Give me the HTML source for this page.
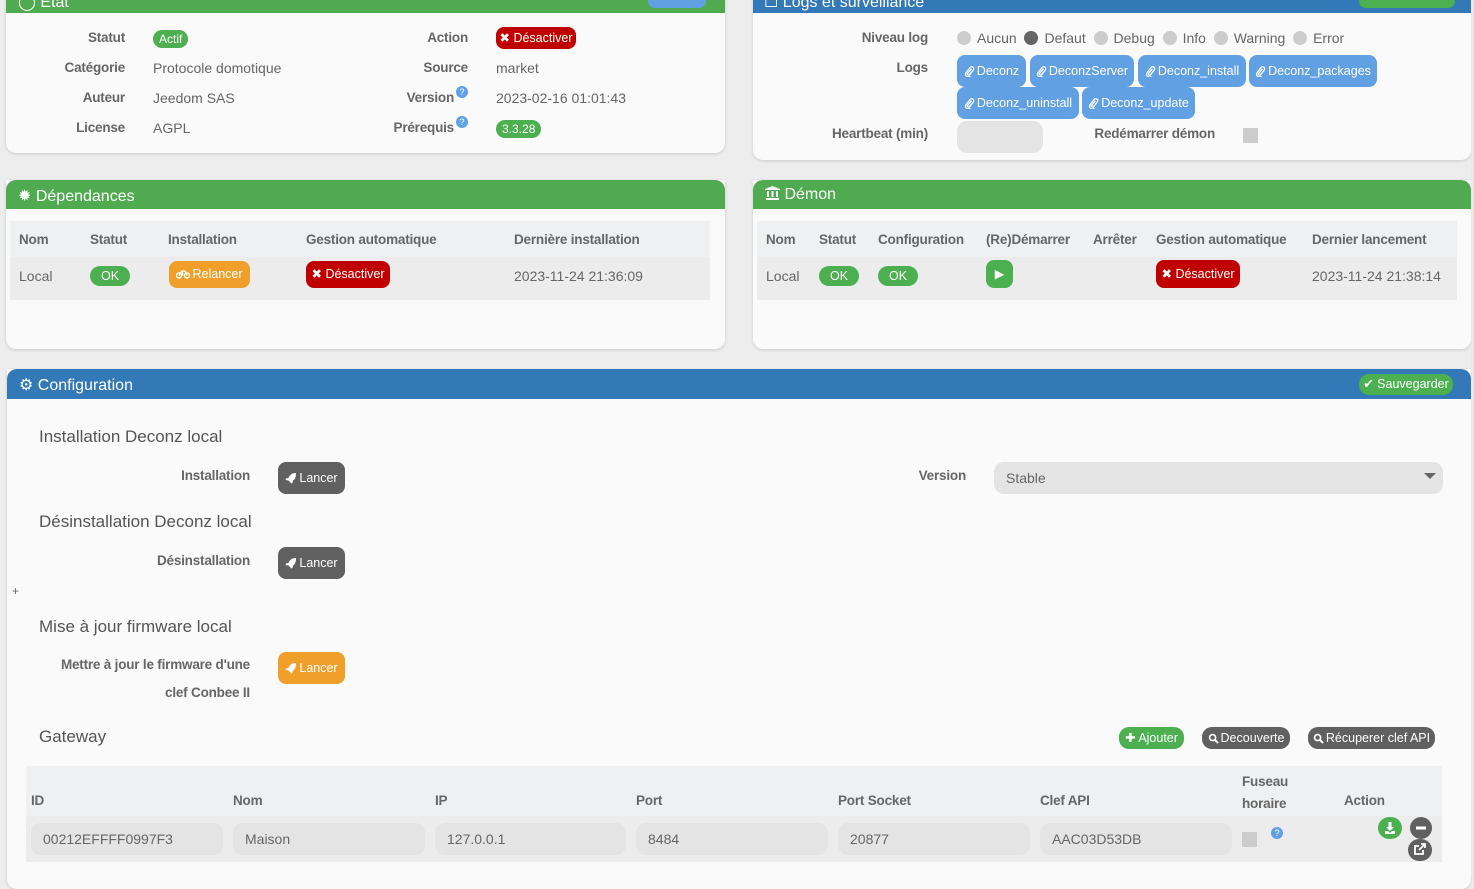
<!DOCTYPE html>
<html><head><meta charset="utf-8"><style>
*{box-sizing:border-box;margin:0;padding:0}
body{width:1474px;height:877px;overflow:hidden;background:#ecedec;font-family:"Liberation Sans",sans-serif;font-size:14px;color:#666;position:relative}
.a{position:absolute;white-space:nowrap}
.panel{position:absolute;background:#fafafa;border-radius:0 0 10px 10px;box-shadow:0 1px 3px rgba(0,0,0,.15)}
.hd{position:absolute;color:#fff;font-size:16px;padding:6px 12px;border-radius:10px 10px 0 0}
.g{background:#50ab50}.b{background:#3479b7}
.lbl{font-weight:bold;color:#666;text-align:right;font-size:13.5px;letter-spacing:-0.2px}
.badge{position:absolute;border-radius:10px;color:#fff;font-size:12px;padding:2px 6px;line-height:14px}
.btn{position:absolute;border-radius:8px;color:#fff;font-size:12.5px;text-align:center}
.btn svg{vertical-align:-2px;margin-right:2px}
.red{background:#c00000}.org{background:#f0a02a}.dg{background:#606060}.lb{background:#62a0e4}.gr{background:#4caf50}
.th{font-weight:bold;color:#666;font-size:13.5px;letter-spacing:-0.2px}
.inp{position:absolute;background:#e3e4e3;border-radius:10px;height:32px;line-height:32px;padding-left:12px;color:#666}
.rad{display:inline-block;width:14px;height:14px;border-radius:50%;background:#ccc;vertical-align:-2px;margin-right:6px}
</style></head><body>
<svg width="0" height="0" style="position:absolute">
<defs>
<symbol id="clip" viewBox="0 0 12 12"><path d="M8 3 L4 8 a1.3 1.3 0 0 0 2 1.6 L10 4.5 a2.2 2.2 0 0 0 -3.3 -3 L2.5 7 a3 3 0 0 0 4.5 4" fill="none" stroke="#fff" stroke-width="1.4"/></symbol>
<symbol id="rock" viewBox="0 0 12 12"><path d="M11 1 C7 1 4.5 3 3.5 6 L1 6.5 L0.5 8 L3.5 8.5 L5.5 10.5 L6 11.5 L7.5 11 L8 8.5 C10 7.5 11 5 11 1Z" fill="#fff"/></symbol>
<symbol id="mag" viewBox="0 0 12 12"><circle cx="5" cy="5" r="3.3" fill="none" stroke="#fff" stroke-width="1.8"/><path d="M7.5 7.5 L11 11" stroke="#fff" stroke-width="2.2"/></symbol>
</defs></svg>

<!-- Etat -->
<div class="panel" style="left:6px;top:-20px;width:719px;height:173px"></div>
<div class="hd g" style="left:6px;top:-20px;width:719px;height:33px;border-radius:0"></div>
<div class="a" style="left:18px;top:-8px;color:#fff;font-size:16px">◯ Etat</div>
<div class="btn lb" style="left:648px;top:-6px;width:58px;height:14px"></div>
<div class="a lbl" style="left:40px;top:30px;width:85px">Statut</div>
<div class="badge" style="left:153px;top:30px;background:#4caf50">Actif</div>
<div class="a lbl" style="left:40px;top:60px;width:85px">Catégorie</div>
<div class="a" style="left:153px;top:60px">Protocole domotique</div>
<div class="a lbl" style="left:40px;top:90px;width:85px">Auteur</div>
<div class="a" style="left:153px;top:90px">Jeedom SAS</div>
<div class="a lbl" style="left:40px;top:120px;width:85px">License</div>
<div class="a" style="left:153px;top:120px">AGPL</div>
<div class="a lbl" style="left:368px;top:30px;width:100px">Action</div>
<div class="btn red" style="left:496px;top:27px;width:80px;height:22px;line-height:22px">✖ Désactiver</div>
<div class="a lbl" style="left:368px;top:60px;width:100px">Source</div>
<div class="a" style="left:496px;top:60px">market</div>
<div class="a lbl" style="left:368px;top:90px;width:86px">Version</div>
<div class="a" style="left:456px;top:86px;width:12px;height:12px;border-radius:50%;background:#62a0e4;color:#fff;font-size:9px;text-align:center;line-height:12px">?</div>
<div class="a" style="left:496px;top:90px">2023-02-16 01:01:43</div>
<div class="a lbl" style="left:368px;top:120px;width:86px">Prérequis</div>
<div class="a" style="left:456px;top:116px;width:12px;height:12px;border-radius:50%;background:#62a0e4;color:#fff;font-size:9px;text-align:center;line-height:12px">?</div>
<div class="badge" style="left:496px;top:120px;background:#4caf50">3.3.28</div>

<!-- Logs -->
<div class="panel" style="left:753px;top:-20px;width:718px;height:180px"></div>
<div class="hd b" style="left:753px;top:-20px;width:718px;height:33px;border-radius:0"></div>
<div class="a" style="left:764px;top:-8px;color:#fff;font-size:16px">☐ Logs et surveillance</div>
<div class="btn gr" style="left:1359px;top:-6px;width:96px;height:14px"></div>
<div class="a lbl" style="left:800px;top:30px;width:128px">Niveau log</div>
<div class="a" style="left:957px;top:30px"><span class="rad"></span>Aucun &nbsp;<span class="rad" style="background:#666"></span>Defaut &nbsp;<span class="rad"></span>Debug &nbsp;<span class="rad"></span>Info &nbsp;<span class="rad"></span>Warning &nbsp;<span class="rad"></span>Error</div>
<div class="a lbl" style="left:800px;top:60px;width:128px">Logs</div>
<div class="btn lb" style="left:957px;top:55px;width:69px;height:32px;line-height:32px"><svg width="11" height="11"><use href="#clip"/></svg>Deconz</div>
<div class="btn lb" style="left:1030px;top:55px;width:104px;height:32px;line-height:32px"><svg width="11" height="11"><use href="#clip"/></svg>DeconzServer</div>
<div class="btn lb" style="left:1138px;top:55px;width:108px;height:32px;line-height:32px"><svg width="11" height="11"><use href="#clip"/></svg>Deconz_install</div>
<div class="btn lb" style="left:1249px;top:55px;width:128px;height:32px;line-height:32px"><svg width="11" height="11"><use href="#clip"/></svg>Deconz_packages</div>
<div class="btn lb" style="left:957px;top:87px;width:122px;height:32px;line-height:32px"><svg width="11" height="11"><use href="#clip"/></svg>Deconz_uninstall</div>
<div class="btn lb" style="left:1082px;top:87px;width:113px;height:32px;line-height:32px"><svg width="11" height="11"><use href="#clip"/></svg>Deconz_update</div>
<div class="a lbl" style="left:800px;top:126px;width:128px">Heartbeat (min)</div>
<div class="a" style="left:957px;top:121px;width:86px;height:32px;border-radius:10px;background:#e3e4e3"></div>
<div class="a lbl" style="left:1060px;top:126px;width:155px">Redémarrer démon</div>
<div class="a" style="left:1243px;top:128px;width:15px;height:15px;background:#ccc"></div>

<!-- Dependances -->
<div class="panel" style="left:6px;top:180px;width:719px;height:169px"></div>
<div class="hd g" style="left:6px;top:180px;width:719px;height:29px">✹ Dépendances</div>
<div class="a" style="left:10px;top:221px;width:700px;height:79px;background:#eff0f1"></div>
<div class="a" style="left:10px;top:257px;width:700px;height:43px;background:#ececec"></div>
<div class="a th" style="left:19px;top:232px">Nom</div>
<div class="a th" style="left:90px;top:232px">Statut</div>
<div class="a th" style="left:168px;top:232px">Installation</div>
<div class="a th" style="left:306px;top:232px">Gestion automatique</div>
<div class="a th" style="left:514px;top:232px">Dernière installation</div>
<div class="a" style="left:19px;top:268px">Local</div>
<div class="btn gr" style="left:90px;top:266px;width:40px;height:20px;line-height:20px;border-radius:10px">OK</div>
<div class="btn org" style="left:169px;top:261px;width:81px;height:27px;line-height:27px"><svg width="14" height="10" viewBox="0 0 14 10" style="vertical-align:-1px"><circle cx="3" cy="6.5" r="2.5" fill="none" stroke="#fff" stroke-width="1.4"/><circle cx="11" cy="6.5" r="2.5" fill="none" stroke="#fff" stroke-width="1.4"/><path d="M3 6.5 L6 2 L9 2 L11 6.5 M6 2 L7 6.5" fill="none" stroke="#fff" stroke-width="1.3"/></svg>Relancer</div>
<div class="btn red" style="left:306px;top:261px;width:84px;height:27px;line-height:27px">✖ Désactiver</div>
<div class="a" style="left:514px;top:268px">2023-11-24 21:36:09</div>

<!-- Demon -->
<div class="panel" style="left:753px;top:180px;width:718px;height:169px"></div>
<div class="hd g" style="left:753px;top:180px;width:718px;height:29px"><svg width="15" height="14" viewBox="0 0 15 14" style="vertical-align:-1px"><path d="M7.5 0 L15 3 L15 4 L0 4 L0 3Z M1 12 L14 12 L14 14 L1 14Z M2 5 h2 v6 h-2Z M6.5 5 h2 v6 h-2Z M11 5 h2 v6 h-2Z" fill="#fff"/></svg> Démon</div>
<div class="a" style="left:757px;top:221px;width:700px;height:79px;background:#eff0f1"></div>
<div class="a" style="left:757px;top:257px;width:700px;height:43px;background:#ececec"></div>
<div class="a th" style="left:766px;top:232px">Nom</div>
<div class="a th" style="left:819px;top:232px">Statut</div>
<div class="a th" style="left:878px;top:232px">Configuration</div>
<div class="a th" style="left:986px;top:232px">(Re)Démarrer</div>
<div class="a th" style="left:1093px;top:232px">Arrêter</div>
<div class="a th" style="left:1156px;top:232px">Gestion automatique</div>
<div class="a th" style="left:1312px;top:232px">Dernier lancement</div>
<div class="a" style="left:766px;top:268px">Local</div>
<div class="btn gr" style="left:819px;top:266px;width:40px;height:20px;line-height:20px;border-radius:10px">OK</div>
<div class="btn gr" style="left:878px;top:266px;width:40px;height:20px;line-height:20px;border-radius:10px">OK</div>
<div class="btn gr" style="left:986px;top:260px;width:27px;height:28px;line-height:28px">▶</div>
<div class="btn red" style="left:1156px;top:260px;width:84px;height:28px;line-height:28px">✖ Désactiver</div>
<div class="a" style="left:1312px;top:268px">2023-11-24 21:38:14</div>

<!-- Configuration -->
<div class="panel" style="left:7px;top:369px;width:1464px;height:520px"></div>
<div class="hd b" style="left:7px;top:369px;width:1464px;height:30px;padding-top:6px">⚙ Configuration</div>
<div class="btn gr" style="left:1359px;top:374px;width:94px;height:21px;line-height:21px;border-radius:10px">✔ Sauvegarder</div>
<div class="a" style="left:39px;top:427px;font-size:17px;color:#555">Installation Deconz local</div>
<div class="a lbl" style="left:100px;top:468px;width:150px">Installation</div>
<div class="btn dg" style="left:278px;top:462px;width:67px;height:32px;line-height:32px"><svg width="12" height="12"><use href="#rock"/></svg>Lancer</div>
<div class="a lbl" style="left:868px;top:468px;width:98px">Version</div>
<div class="a" style="left:994px;top:462px;width:449px;height:32px;border-radius:10px;background:#e3e4e3;padding:8px 12px">Stable<svg style="position:absolute;right:7px;top:11px" width="12" height="7"><path d="M0 0 L12 0 L6 6Z" fill="#666"/></svg></div>
<div class="a" style="left:39px;top:512px;font-size:17px;color:#555">Désinstallation Deconz local</div>
<div class="a lbl" style="left:100px;top:553px;width:150px">Désinstallation</div>
<div class="btn dg" style="left:278px;top:547px;width:67px;height:32px;line-height:32px"><svg width="12" height="12"><use href="#rock"/></svg>Lancer</div>
<div class="a" style="left:12px;top:584px;font-size:12px">+</div>
<div class="a" style="left:39px;top:617px;font-size:17px;color:#555">Mise à jour firmware local</div>
<div class="a lbl" style="left:40px;top:657px;width:210px">Mettre à jour le firmware d'une</div>
<div class="a lbl" style="left:40px;top:685px;width:210px">clef Conbee II</div>
<div class="btn org" style="left:278px;top:652px;width:67px;height:32px;line-height:32px"><svg width="12" height="12"><use href="#rock"/></svg>Lancer</div>
<div class="a" style="left:39px;top:727px;font-size:17px;color:#555">Gateway</div>
<div class="btn gr" style="left:1119px;top:727px;width:65px;height:22px;line-height:22px;border-radius:10px">✚ Ajouter</div>
<div class="btn dg" style="left:1202px;top:727px;width:88px;height:22px;line-height:22px;border-radius:10px"><svg width="11" height="11"><use href="#mag"/></svg>Decouverte</div>
<div class="btn dg" style="left:1308px;top:727px;width:127px;height:22px;line-height:22px;border-radius:10px"><svg width="11" height="11"><use href="#mag"/></svg>Récuperer clef API</div>
<div class="a" style="left:26px;top:766px;width:1416px;height:96px;background:#eff0f1"></div>
<div class="a" style="left:26px;top:816px;width:1416px;height:46px;background:#ececec"></div>
<div class="a th" style="left:31px;top:793px">ID</div>
<div class="a th" style="left:233px;top:793px">Nom</div>
<div class="a th" style="left:435px;top:793px">IP</div>
<div class="a th" style="left:636px;top:793px">Port</div>
<div class="a th" style="left:838px;top:793px">Port Socket</div>
<div class="a th" style="left:1040px;top:793px">Clef API</div>
<div class="a th" style="left:1242px;top:771px;line-height:22px">Fuseau<br>horaire</div>
<div class="a th" style="left:1344px;top:793px">Action</div>
<div class="inp" style="left:31px;top:823px;width:192px">00212EFFFF0997F3</div>
<div class="inp" style="left:233px;top:823px;width:192px">Maison</div>
<div class="inp" style="left:435px;top:823px;width:191px">127.0.0.1</div>
<div class="inp" style="left:636px;top:823px;width:192px">8484</div>
<div class="inp" style="left:838px;top:823px;width:192px">20877</div>
<div class="inp" style="left:1040px;top:823px;width:192px">AAC03D53DB</div>
<div class="a" style="left:1242px;top:832px;width:15px;height:15px;background:#ccc"></div>
<div class="a" style="left:1271px;top:827px;width:12px;height:12px;border-radius:50%;background:#62a0e4;color:#fff;font-size:9px;text-align:center;line-height:12px">?</div>
<div class="a" style="left:1378px;top:817px;width:24px;height:22px;border-radius:11px;background:#4caf50"><svg width="24" height="22" viewBox="0 0 24 22"><path d="M10.5 5 h3 v5 h2.5 L12 14 L8 10 h2.5Z M7 14 h3 l2 2 l2 -2 h3 v3 h-10Z" fill="#fff"/></svg></div>
<div class="a" style="left:1410px;top:817px;width:22px;height:22px;border-radius:11px;background:#606060"><svg width="22" height="22"><rect x="6" y="9.5" width="10" height="3" fill="#fff"/></svg></div>
<div class="a" style="left:1408px;top:839px;width:24px;height:22px;border-radius:11px;background:#606060"><svg width="24" height="22" viewBox="0 0 24 22"><path d="M11 7 H7 V15 H15 V11" fill="none" stroke="#fff" stroke-width="1.8"/><path d="M11 11 L17 5 M13 5 H17 V9" fill="none" stroke="#fff" stroke-width="1.8"/></svg></div>
<div class="a" style="left:1471px;top:0;width:3px;height:877px;background:#e8e8e8"></div>
</body></html>
